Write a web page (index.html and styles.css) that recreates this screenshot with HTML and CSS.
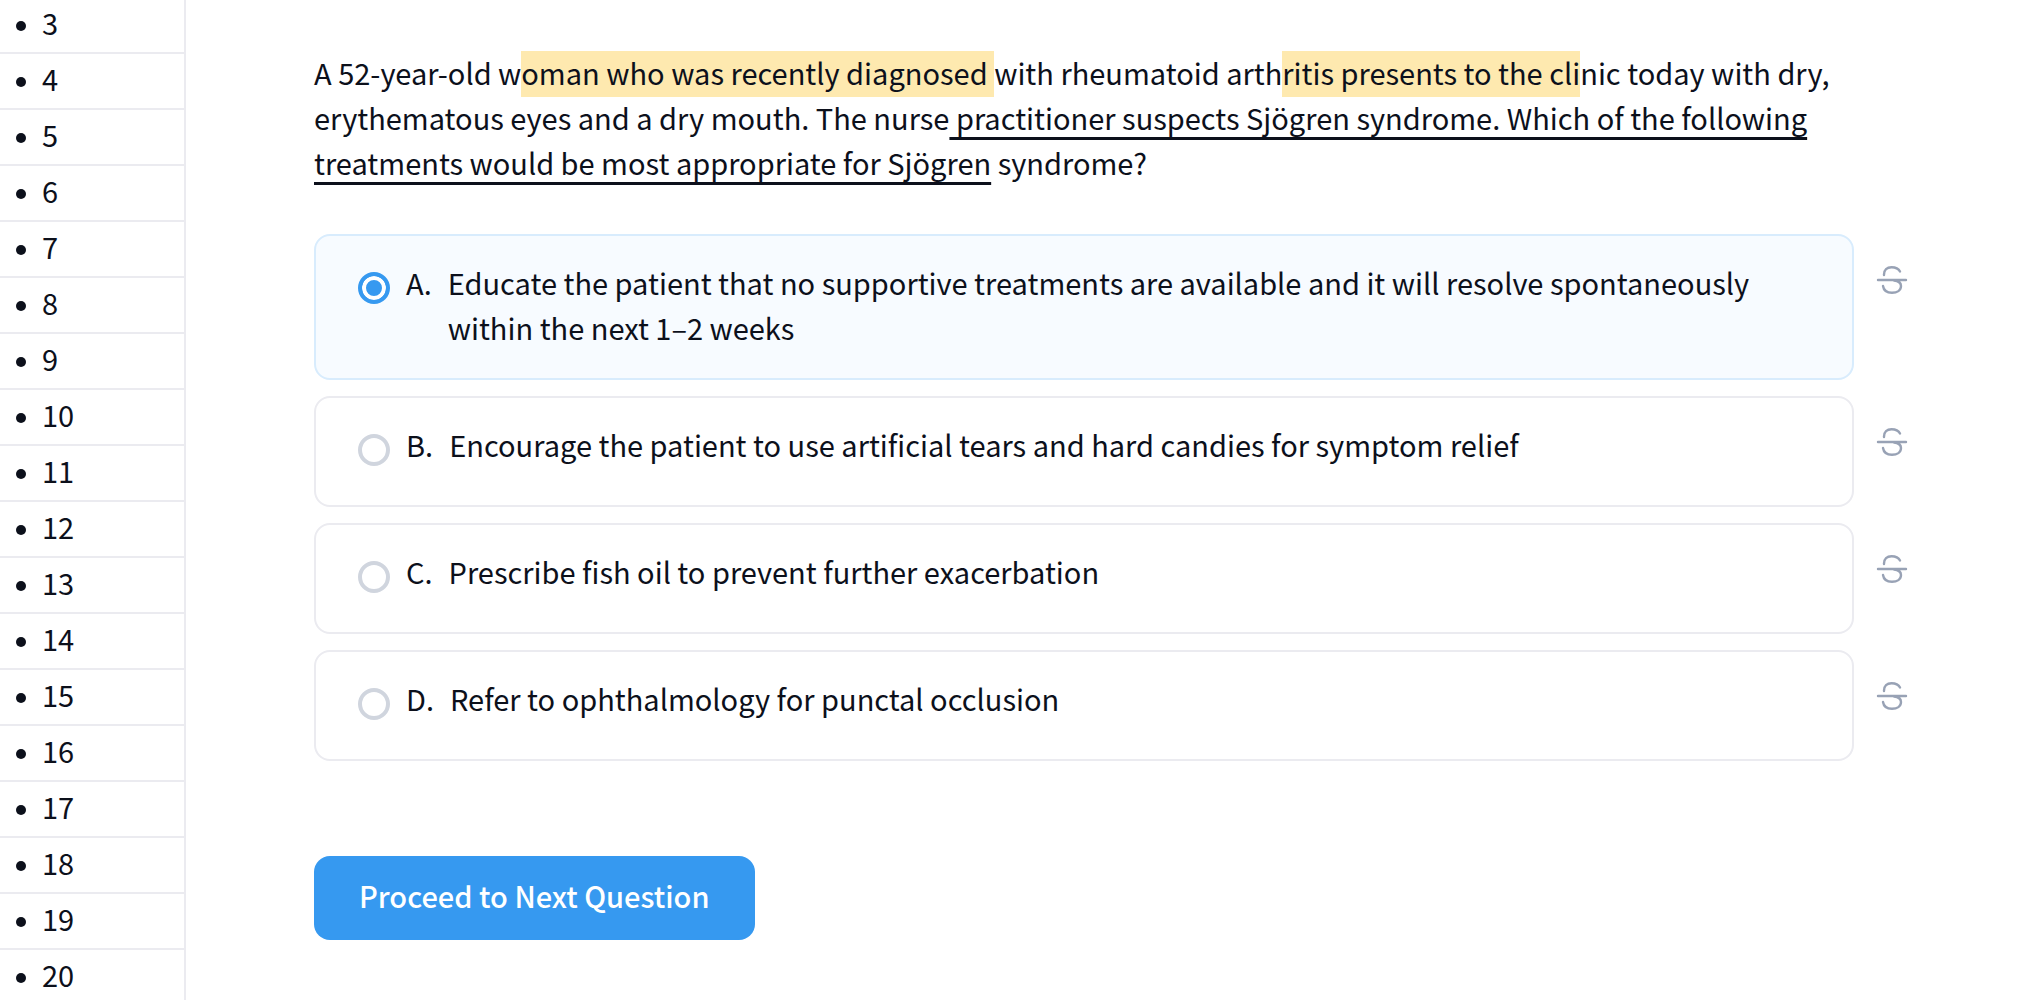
FILE: index.html
```html
<!DOCTYPE html>
<html lang="en">
<head>
<meta charset="utf-8">
<title>Practice Question</title>
<link rel="stylesheet" href="styles.css">
</head>
<body>
<div class="app">
  <nav class="sidebar" aria-label="Questions">
    <ol class="question-list">
      <li class="question-item"><a href="#q3">3</a></li>
      <li class="question-item"><a href="#q4">4</a></li>
      <li class="question-item"><a href="#q5">5</a></li>
      <li class="question-item"><a href="#q6">6</a></li>
      <li class="question-item"><a href="#q7">7</a></li>
      <li class="question-item"><a href="#q8">8</a></li>
      <li class="question-item"><a href="#q9">9</a></li>
      <li class="question-item"><a href="#q10">10</a></li>
      <li class="question-item"><a href="#q11">11</a></li>
      <li class="question-item"><a href="#q12">12</a></li>
      <li class="question-item"><a href="#q13">13</a></li>
      <li class="question-item"><a href="#q14">14</a></li>
      <li class="question-item"><a href="#q15">15</a></li>
      <li class="question-item"><a href="#q16">16</a></li>
      <li class="question-item"><a href="#q17">17</a></li>
      <li class="question-item"><a href="#q18">18</a></li>
      <li class="question-item"><a href="#q19">19</a></li>
      <li class="question-item"><a href="#q20">20</a></li>
    </ol>
  </nav>
  <main class="content">
    <form class="question">
      <p class="stem">A 52-year-old w<mark>oman who was recently diagnosed </mark>with rheumatoid arth<mark>ritis presents to the cli</mark>nic today with dry, erythematous eyes and a dry mouth. The nurse<span class="underline"> practitioner suspects Sjögren syndrome. Which of the following treatments would be most appropriate for Sjögren</span> syndrome?</p>
      <div class="choices">
        <div class="choice-row">
          <label class="choice choice-selected"><input class="radio" type="radio" name="answer" checked><span>A.</span><span class="choice-text">Educate the patient that no supportive treatments are available and it will resolve spontaneously within the next 1–2 weeks</span></label>
          <button class="strike" type="button" aria-label="Strike out A"><svg viewBox="0 0 32 32"><use href="#strike-icon"/></svg></button>
        </div>
        <div class="choice-row">
          <label class="choice"><input class="radio" type="radio" name="answer"><span>B.</span><span class="choice-text">Encourage the patient to use artificial tears and hard candies for symptom relief</span></label>
          <button class="strike" type="button" aria-label="Strike out B"><svg viewBox="0 0 32 32"><use href="#strike-icon"/></svg></button>
        </div>
        <div class="choice-row">
          <label class="choice"><input class="radio" type="radio" name="answer"><span>C.</span><span class="choice-text">Prescribe fish oil to prevent further exacerbation</span></label>
          <button class="strike" type="button" aria-label="Strike out C"><svg viewBox="0 0 32 32"><use href="#strike-icon"/></svg></button>
        </div>
        <div class="choice-row">
          <label class="choice"><input class="radio" type="radio" name="answer"><span>D.</span><span class="choice-text">Refer to ophthalmology for punctal occlusion</span></label>
          <button class="strike" type="button" aria-label="Strike out D"><svg viewBox="0 0 32 32"><use href="#strike-icon"/></svg></button>
        </div>
      </div>
      <button class="proceed" type="button">Proceed to Next Question</button>
    </form>
  </main>
</div>
<svg class="sprite" aria-hidden="true"><symbol id="strike-icon" viewBox="0 0 32 32"><path d="M2 16H30M8 11V10.5C8 6 11 3.200 15.500 3.200C19.500 3.200 22.500 4.500 24 7.500M18 16.500C22.500 17 25 19 25 22C25 26.500 21 28.800 16 28.800C11 28.800 7.700 26.500 7 22" fill="none" stroke="currentColor" stroke-width="2.4" stroke-linecap="round"/></symbol></svg>
</body>
</html>
```
FILE: styles.css
```css
* { box-sizing: border-box; }
body {
  margin: 0;
  color: #0c101b;
  background: #fff;
  font-family: "Noto Sans CJK SC", sans-serif;
  font-size: 29px;
  line-height: 45px;
}
.app { display: flex; height: 100vh; overflow: hidden; }
.sidebar { flex: none; width: 186px; border-right: 2px solid #ebebf0; }
.question-list { margin: -2px 0 0; padding: 0; list-style: none; }
.question-item {
  display: flex;
  height: 56px;
  border-bottom: 2px solid #ebebf0;
}
.question-item a {
  display: flex;
  flex: 1;
  align-items: center;
  gap: 16px;
  padding: 0 0 6px 16px;
  color: inherit;
  text-decoration: none;
}
.question-item a::before {
  content: "";
  width: 10px;
  height: 10px;
  margin-top: 8px;
  border-radius: 50%;
  background: currentColor;
}
.content { flex: 1; padding: 50px 114px 48px 128px; }
.stem { margin: 0 54px 49px 0; }
mark { padding-bottom: 4px; color: inherit; background: #fee9af; }
.underline {
  text-decoration: underline 3px;
  text-decoration-skip-ink: none;
  text-underline-offset: 7px;
}
.choices { display: grid; gap: 16px; }
.choice-row { display: flex; gap: 22px; }
.choice {
  display: flex;
  flex: 1;
  gap: 16px;
  min-height: 111px;
  padding: 24px 42px 28px;
  border: 2px solid #ebebf0;
  border-radius: 16px;
}
.choice-selected { background: #f7fbff; border-color: #d8ecfd; }
.radio {
  appearance: none;
  flex: none;
  width: 32px;
  height: 32px;
  margin: 12px 0 0;
  border: 4px solid #d0d5de;
  border-radius: 50%;
}
.radio:checked {
  border-color: #3699f0;
  background: #3699f0;
  box-shadow: inset 0 0 0 4px #fff;
}
.strike {
  align-self: flex-start;
  width: 32px;
  margin-top: 30px;
  padding: 0;
  border: 0;
  background: none;
  color: #98a2b5;
}
.strike svg { display: block; width: 32px; height: 32px; }
.proceed {
  margin-top: 95px;
  padding: 17px 45px 22px;
  border: 0;
  border-radius: 16px;
  background: #3699f0;
  color: #fff;
  font: inherit;
  font-weight: 500;
}
.sprite { display: none; }
```
